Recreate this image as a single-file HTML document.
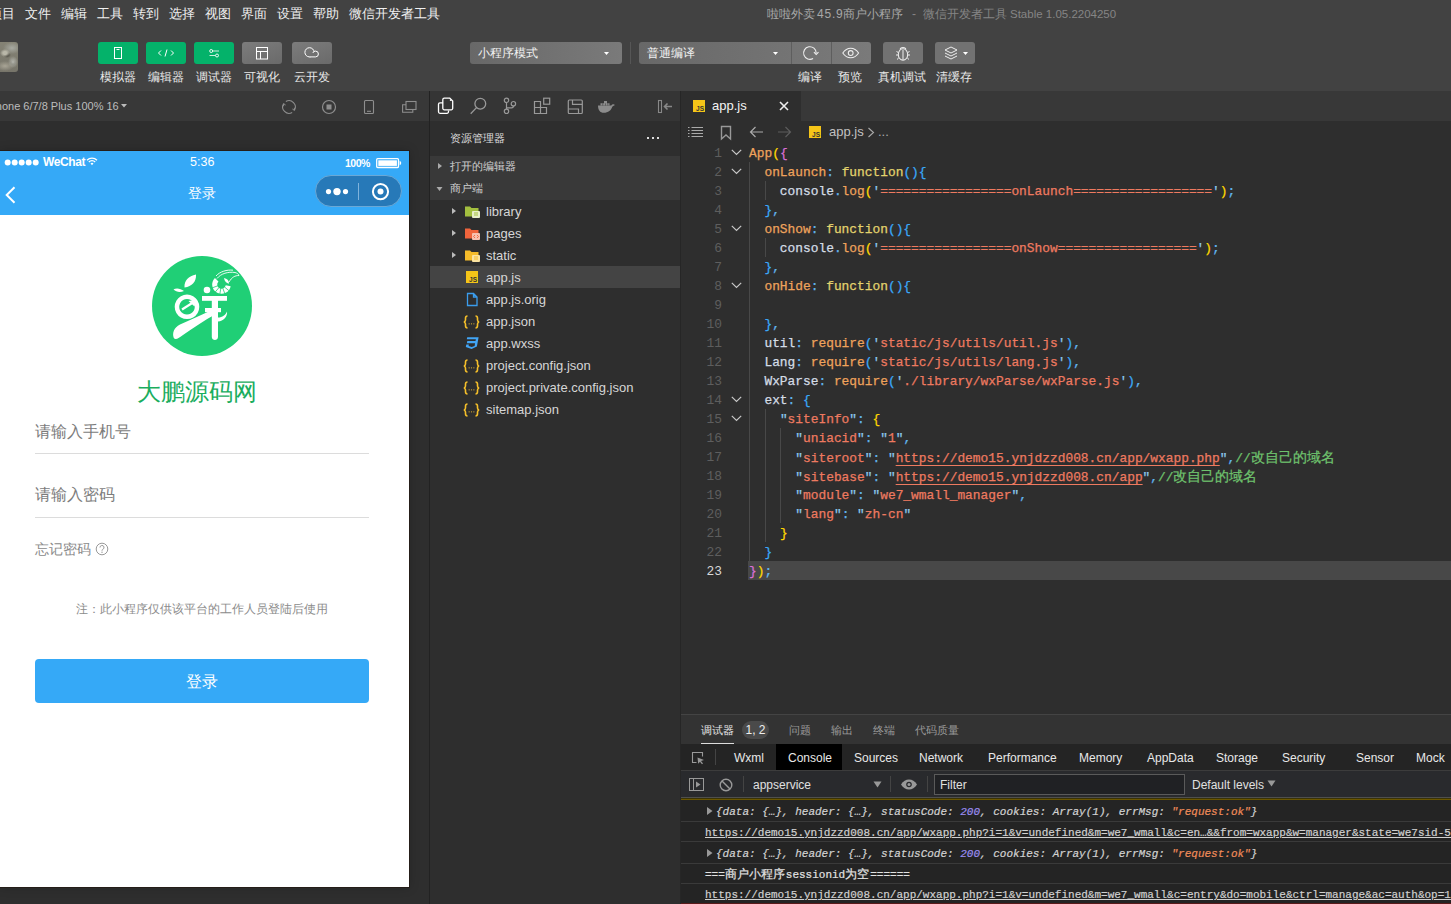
<!DOCTYPE html>
<html><head><meta charset="utf-8">
<style>
*{margin:0;padding:0;box-sizing:border-box}
html,body{width:1451px;height:904px;overflow:hidden;background:#424242;font-family:"Liberation Sans",sans-serif;color:#ddd}
.a{position:absolute}
.ttl span{position:absolute;top:6px;font-size:12px;line-height:16px;white-space:nowrap;color:#858585}
.menu span{position:absolute;top:5px;font-size:13px;line-height:18px;color:#f0f0f0;white-space:nowrap}
.tb{position:absolute;top:42px;width:40px;height:22px;border-radius:3px;background:#04b26a}
.tb.g{background:linear-gradient(160deg,#7c7c7c,#6a6a6a)}
.lbl{position:absolute;top:69px;font-size:12px;line-height:16px;color:#e8e8e8;white-space:nowrap}
.dd{position:absolute;top:42px;height:22px;border-radius:3px;background:linear-gradient(to right,#686868,#7a7a7a)}
svg{position:absolute;overflow:visible}
.cl{position:absolute;left:749px;margin-top:1px;height:19px;font-family:"Liberation Mono",monospace;font-size:12.87px;line-height:19px;white-space:pre;color:#d4dde6;-webkit-text-stroke:0.25px currentColor}
.ln{position:absolute;left:690px;margin-top:1px;width:32px;text-align:right;font-family:"Liberation Mono",monospace;font-size:12.87px;line-height:19px;color:#5e5e5e}
.ln.cur{color:#d8d8d8}
.ig{position:absolute;width:1px;background:#484848}
.o{color:#efa35c}.y{color:#e3d36d}.b{color:#62b6ee}.t{color:#d4dde6}.s{color:#ee7a60}.q{color:#8cc8ec}.c{color:#6ec26d}
.by{color:#ffd700}.bm{color:#da70d6}.bb{color:#3aa8f8}
.u{color:#ee7a60;text-decoration:underline;text-underline-offset:3px}

.dbt{top:722px;font-size:11px;line-height:16px;color:#9a9a9a;white-space:nowrap}
.dvt span{position:absolute;top:750px;font-size:12px;line-height:16px;color:#e8e8e8;white-space:nowrap}
.cm{position:absolute;font-family:"Liberation Mono",monospace;font-size:11px;line-height:14px;white-space:pre;color:#e2e2e2;-webkit-text-stroke:0.2px currentColor}
.it{font-style:italic;color:#d2d2d2}
.num{color:#9a8cf0}.str{color:#f08c5a}
.lk{text-decoration:underline;color:#d0d0d0}
.cjc{font-family:"Liberation Sans",sans-serif;font-size:12px;display:inline-block;width:61px}
.cjc2{font-family:"Liberation Sans",sans-serif;font-size:12px;display:inline-block;width:25px}
.cj{color:#6ec26d;font-family:"Liberation Sans",sans-serif;font-size:14px;display:inline-block;width:84px}

</style></head><body>

<!-- ===== menu bar ===== -->
<div class="menu">
<span style="left:-11px">项目</span><span style="left:25px">文件</span><span style="left:61px">编辑</span><span style="left:97px">工具</span><span style="left:133px">转到</span><span style="left:169px">选择</span><span style="left:205px">视图</span><span style="left:241px">界面</span><span style="left:277px">设置</span><span style="left:313px">帮助</span><span style="left:349px">微信开发者工具</span>
</div>
<div class="ttl"><span style="left:767px;color:#a8a8a8">啦啦外卖</span><span style="left:817px;color:#a8a8a8;letter-spacing:0.8px">45.9</span><span style="left:843px;color:#a8a8a8">商户小程序</span><span style="left:912px">-</span><span style="left:923px">微信开发者工具</span><span style="left:1010px;font-size:11.5px">Stable 1.05.2204250</span></div>

<!-- ===== toolbar ===== -->
<div class="a" style="left:0;top:42px;width:18px;height:30px;border-radius:0 3px 3px 0;background:radial-gradient(ellipse 5px 4px at 5px 11px,#b9b7a8 0,#b9b7a8 40%,transparent 100%),radial-gradient(ellipse 4px 3px at 7px 13px,#3e3d35 0,transparent 100%),radial-gradient(ellipse 5px 6px at 13px 20px,#b7b8b0 0,transparent 100%),radial-gradient(ellipse 3px 3px at 13px 21px,#4a4940 0,transparent 100%),radial-gradient(ellipse 9px 5px at 5px 24px,#a9a596 0,transparent 100%),radial-gradient(ellipse 9px 6px at 12px 6px,#a8aaa2 0,transparent 100%),linear-gradient(#858375,#77756a)"></div>
<div class="tb" style="left:98px"><svg style="left:0;top:0" width="40" height="22"><rect x="16.5" y="5.5" width="7" height="11" fill="none" stroke="#fff" stroke-width="1"/><line x1="18.5" y1="7.5" x2="21.5" y2="7.5" stroke="#fff"/></svg></div>
<div class="tb" style="left:146px"><svg style="left:0;top:0" width="40" height="22"><path d="M15 8.5l-2.5 2.5 2.5 2.5M25 8.5l2.5 2.5-2.5 2.5M21 7.5l-2 7" fill="none" stroke="#fff" stroke-width="1"/></svg></div>
<div class="tb" style="left:194px"><svg style="left:0;top:0" width="40" height="22"><path d="M18.5 9h6.5M15.5 13.5h6" stroke="#cdeedd" stroke-width="1"/><circle cx="17.2" cy="9" r="1.5" fill="#04b26a" stroke="#fff" stroke-width="0.9"/><circle cx="23" cy="13.5" r="1.5" fill="#04b26a" stroke="#fff" stroke-width="0.9"/></svg></div>
<div class="tb g" style="left:242px"><svg style="left:0;top:0" width="40" height="22"><rect x="14.5" y="5.5" width="11" height="11.5" fill="none" stroke="#fff"/><path d="M14.5 9.5h11M18.5 9.5v7.5" stroke="#fff"/></svg></div>
<div class="tb g" style="left:292px"><svg style="left:0;top:0" width="40" height="22"><circle cx="17.5" cy="10.3" r="4.6" fill="none" stroke="#fff" stroke-width="1"/><path d="M17.5 14.9H23.5A2.9 2.9 0 0 0 23.5 9.1A2.9 2.9 0 0 0 20.8 11" fill="#717171" stroke="#fff" stroke-width="1"/></svg></div>
<span class="lbl" style="left:100px">模拟器</span><span class="lbl" style="left:148px">编辑器</span><span class="lbl" style="left:196px">调试器</span><span class="lbl" style="left:244px">可视化</span><span class="lbl" style="left:294px">云开发</span>

<div class="dd" style="left:470px;width:152px"><span class="a" style="left:8px;top:3px;font-size:12px;line-height:16px;color:#f2f2f2">小程序模式</span><svg style="left:134px;top:10px" width="6" height="4"><path d="M0 0h5l-2.5 3z" fill="#fff"/></svg></div>
<div class="a" style="left:630px;top:42px;width:1px;height:22px;background:#565656"></div>
<div class="dd" style="left:639px;width:232px"><span class="a" style="left:8px;top:3px;font-size:12px;line-height:16px;color:#f2f2f2">普通编译</span><svg style="left:134px;top:10px" width="6" height="4"><path d="M0 0h5l-2.5 3z" fill="#fff"/></svg>
<div class="a" style="left:152px;top:0;width:1px;height:22px;background:#5e5e5e"></div><div class="a" style="left:192px;top:0;width:1px;height:22px;background:#5e5e5e"></div>
<svg style="left:163px;top:1px" width="18" height="18"><path d="M11.05 15.46A6.3 6.3 0 1 1 14.2 10" fill="none" stroke="#eee" stroke-width="1.1"/><path d="M11.9 9.2L14.2 11.5L16.5 9.2" fill="none" stroke="#eee" stroke-width="1.1"/></svg>
<svg style="left:203px;top:3px" width="18" height="16"><path d="M0.8 8c2.2-3.3 4.7-4.8 7.9-4.8s5.7 1.5 7.9 4.8c-2.2 3.3-4.7 4.8-7.9 4.8s-5.7-1.5-7.9-4.8z" fill="none" stroke="#eee" stroke-width="1.05"/><circle cx="8.7" cy="8" r="2.4" fill="none" stroke="#eee" stroke-width="1.05"/></svg>
</div>
<div class="dd" style="left:883px;width:40px;background:#727272"><svg style="left:12px;top:3px" width="16" height="16"><path d="M3.3 9.5A4.7 5.7 0 0 0 12.7 9.5A4.7 5.7 0 0 0 3.3 9.5Z" fill="none" stroke="#eee" stroke-width="1.05"/><path d="M5.2 4.6A2.8 2.2 0 0 1 10.8 4.6" fill="none" stroke="#eee" stroke-width="1.05"/><path d="M8 5v10M3.3 7.5L1.5 6.5M12.7 7.5L14.5 6.5M3.3 10H1M12.7 10H15M3.8 12.8L2 14.5M12.2 12.8L14 14.5" stroke="#eee" stroke-width="1" fill="none"/></svg></div>
<div class="dd" style="left:935px;width:40px;background:#727272"><svg style="left:8px;top:3px" width="16" height="16"><path d="M8 2l6 3-6 3-6-3z M2 8l6 3 6-3 M2 11l6 3 6-3" fill="none" stroke="#eee"/></svg><svg style="left:28px;top:10px" width="6" height="4"><path d="M0 0h5l-2.5 3z" fill="#fff"/></svg></div>
<span class="lbl" style="left:798px">编译</span><span class="lbl" style="left:838px">预览</span><span class="lbl" style="left:878px">真机调试</span><span class="lbl" style="left:936px">清缓存</span>

<!-- ===== simulator ===== -->
<div class="a" style="left:0;top:91px;width:429px;height:813px;background:#2e2e2e"></div>
<div class="a" style="left:0;top:91px;width:429px;height:30px;background:#383838"></div>
<span class="a" style="left:-14px;top:99px;font-size:11px;line-height:14px;color:#bdbdbd;white-space:nowrap">iPhone 6/7/8 Plus 100% 16</span>
<svg style="left:121px;top:104px" width="6" height="4"><path d="M0 0h6l-3 3.5z" fill="#bbb"/></svg>
<svg style="left:281px;top:99px" width="16" height="16"><path d="M4.85 2.54A6.3 6.3 0 0 1 13.46 11.15M11.15 13.46A6.3 6.3 0 0 1 2.54 4.85" fill="none" stroke="#8e8e8e" stroke-width="1.1"/><path d="M2.6 7.2L2.6 4.6L4.6 6M13.4 8.8L13.4 11.4L11.4 10" fill="none" stroke="#8e8e8e" stroke-width="1"/></svg>
<svg style="left:321px;top:99px" width="16" height="16"><circle cx="8" cy="8" r="6.5" fill="none" stroke="#8e8e8e" stroke-width="1.2"/><rect x="5.5" y="5.5" width="5" height="5" fill="#8e8e8e"/></svg>
<svg style="left:361px;top:99px" width="16" height="16"><rect x="3.5" y="1.5" width="9" height="13" rx="1" fill="none" stroke="#8e8e8e" stroke-width="1.1"/><line x1="6" y1="12.3" x2="10" y2="12.3" stroke="#8e8e8e" stroke-width="1.1"/></svg>
<svg style="left:401px;top:99px" width="16" height="16"><rect x="5" y="2.5" width="10" height="8" fill="none" stroke="#8e8e8e" stroke-width="1.1"/><path d="M5 5.8H1.6V13.3H11.8V10.5" fill="none" stroke="#8e8e8e" stroke-width="1.1"/></svg>

<!-- ===== phone ===== -->
<div class="a" style="left:0;top:151px;width:409px;height:736px;background:#fff;box-shadow:0 0 0 1px rgba(35,25,18,0.7),0 0 10px rgba(0,0,0,0.22)"></div>
<div class="a" style="left:0;top:151px;width:409px;height:64px;background:#35a9f7"></div>
<svg style="left:4px;top:158px" width="40" height="8"><circle cx="3.7" cy="4.5" r="3" fill="#fff"/><circle cx="10.7" cy="4.5" r="3" fill="#fff"/><circle cx="17.7" cy="4.5" r="3" fill="#fff"/><circle cx="24.7" cy="4.5" r="3" fill="#fff"/><circle cx="31.7" cy="4.5" r="3" fill="#fff"/></svg>
<span class="a" style="left:43px;top:155px;font-size:12px;line-height:14px;color:#fff;font-weight:bold;letter-spacing:-0.4px">WeChat</span>
<svg style="left:86px;top:157px" width="12" height="9"><path d="M1 3.2a7 7 0 0 1 10 0M2.8 5a4.5 4.5 0 0 1 6.4 0" fill="none" stroke="#fff" stroke-width="1.3"/><path d="M4.5 6.6a2 2 0 0 1 3 0L6 8.3z" fill="#fff"/></svg>
<span class="a" style="left:190px;top:155px;font-size:12.5px;line-height:14px;color:#fff">5:36</span>
<span class="a" style="left:345px;top:157px;font-size:10.5px;line-height:12px;color:#fff;font-weight:bold;letter-spacing:-0.5px">100%</span>
<svg style="left:376px;top:158px" width="28" height="11"><rect x="0.7" y="0.7" width="21.8" height="8.8" rx="1" fill="none" stroke="#fff" stroke-width="1.3"/><rect x="2.3" y="2.3" width="18.6" height="5.6" fill="#fff"/><path d="M23.6 3c1.1 0.2 1.6 1 1.6 2.1s-0.5 1.9-1.6 2.1z" fill="#fff"/></svg>
<svg style="left:4px;top:186px" width="12" height="18"><path d="M10.5 1.2l-7.8 7.8 7.8 7.8" fill="none" stroke="#fff" stroke-width="2"/></svg>
<span class="a" style="left:186px;top:185px;font-size:14px;line-height:17px;color:#fff;width:32px;text-align:center">登录</span>
<div class="a" style="left:315px;top:175px;width:87px;height:32px;border-radius:16px;background:#2779b8;border:1px solid #6aa8d6"></div>
<svg style="left:326px;top:186px" width="22" height="11"><circle cx="2.5" cy="5.6" r="2.6" fill="#fff"/><circle cx="11" cy="5.6" r="3.7" fill="#fff"/><circle cx="19.5" cy="5.6" r="2.6" fill="#fff"/></svg>
<div class="a" style="left:358px;top:183px;width:1px;height:17px;background:#7fb3dc"></div>
<svg style="left:370px;top:181px" width="20" height="20"><circle cx="10.5" cy="10.6" r="7.6" fill="none" stroke="#fff" stroke-width="2"/><circle cx="10.5" cy="10.6" r="3" fill="#fff"/></svg>

<svg style="left:152px;top:256px" width="100" height="100" viewBox="0 0 100 100">
<circle cx="50" cy="50" r="50" fill="#20cf76"/>
<g fill="#fff">
<path d="M32.5 31.5C32 24.5 36.5 20 44 18.5C44.5 25.5 40 30.5 32.5 31.5Z"/>
<path d="M32 35C28.5 32.3 24.5 31.8 21.5 33.3C24.2 36.3 28.2 36.8 32 35Z"/>
<circle cx="55" cy="34" r="3.3"/>
<path d="M35 38.5A12.3 12.3 0 1 0 35.01 38.5ZM35 43A7.8 7.8 0 1 1 34.99 43Z" fill-rule="evenodd"/>
<path d="M30 53.5L41 46.5" stroke="#fff" stroke-width="2.2"/>
<path d="M44.5 43.5L36.5 45L42.5 50.5Z"/>
<rect x="50" y="40" width="25" height="4.8"/>
<rect x="53" y="52" width="16" height="4.2"/>
<path d="M59.8 40H66V81C66 85 59.8 85 59.8 81Z"/>
<path d="M66 61.5C70.5 61.5 73.5 59 75 55.5C75.8 60.5 71.5 65 66 65.5Z"/>
<path d="M21.8 82C20 77 22 71.5 28 68.5C40 63 52 58 63 52.5L63 58.5C52 64.5 41 72 31 79C27 82 23.5 84.5 21.8 82Z"/>
</g>
<path d="M64.7 23.7A6.8 6.8 0 1 0 76.2 29.7" fill="none" stroke="#fff" stroke-width="5"/>
<path d="M66.1 29.7L60.1 31.9M67.2 31.3L63.1 36.2M68.9 32.0L67.8 38.3M70.7 31.9L72.9 37.9M72.3 30.8L77.2 34.9" stroke="#20cf76" stroke-width="0.8"/>
<path d="M65 22.5C69 17.5 76 15.5 83 16.5C85 17 86.5 18 87 19.5C83 19.5 80 21 77 26M64 20C68 15.5 75 13.5 81 14.2" fill="none" stroke="#fff" stroke-width="0.9"/><path d="M72 22C75 22.5 77 24.5 77 27.5C74.5 27.5 72.5 25 72 22Z" fill="#fff"/>
</svg>
<span class="a" style="left:137px;top:378px;font-size:24px;line-height:28px;color:#1aad5e;width:130px;white-space:nowrap">大鹏源码网</span>
<span class="a" style="left:35px;top:422px;font-size:16px;line-height:20px;color:#7c7c7c">请输入手机号</span>
<div class="a" style="left:35px;top:453px;width:334px;height:1px;background:#dcdcdc"></div>
<span class="a" style="left:35px;top:485px;font-size:16px;line-height:20px;color:#7c7c7c">请输入密码</span>
<div class="a" style="left:35px;top:517px;width:334px;height:1px;background:#dcdcdc"></div>
<span class="a" style="left:35px;top:541px;font-size:14px;line-height:16px;color:#8a8a8a">忘记密码</span>
<svg style="left:95px;top:542px" width="14" height="14"><circle cx="7" cy="7" r="5.8" fill="none" stroke="#999" stroke-width="1"/><path d="M5 5.5a2 2 0 1 1 2.8 1.8c-0.6 0.3-0.8 0.7-0.8 1.4" fill="none" stroke="#999" stroke-width="1"/><circle cx="7" cy="10.3" r="0.7" fill="#999"/></svg>
<span class="a" style="left:76px;top:602px;font-size:12px;line-height:15px;color:#8c8c8c;white-space:nowrap">注：此小程序仅供该平台的工作人员登陆后使用</span>
<div class="a" style="left:35px;top:659px;width:334px;height:44px;border-radius:4px;background:#35a9f7"></div>
<span class="a" style="left:186px;top:672px;font-size:16px;line-height:19px;color:#fff">登录</span>
<div class="a" style="left:429px;top:91px;width:1px;height:813px;background:#222"></div>

<!-- ===== explorer ===== -->
<div class="a" style="left:430px;top:91px;width:250px;height:813px;background:#2e2e2e"></div>
<div class="a" style="left:430px;top:91px;width:251px;height:30px;background:#353535"></div>
<svg style="left:436px;top:96px" width="20" height="20"><path d="M7 6.8H4A1.5 1.5 0 0 0 2.5 8.3V15.8A1.5 1.5 0 0 0 4 17.3H11A1.5 1.5 0 0 0 12.5 15.8V14.5" fill="none" stroke="#fff" stroke-width="1.3"/><path d="M8.3 2.2H13.8L16.7 5.1V12.3A1.5 1.5 0 0 1 15.2 13.8H8.3A1.5 1.5 0 0 1 6.8 12.3V3.7A1.5 1.5 0 0 1 8.3 2.2Z" fill="none" stroke="#fff" stroke-width="1.3"/><circle cx="14.6" cy="4.2" r="0.8" fill="#fff"/></svg>
<svg style="left:468px;top:96px" width="20" height="20"><circle cx="12.3" cy="7.7" r="5.4" fill="none" stroke="#999" stroke-width="1.3"/><path d="M8.5 11.6L2.7 17.8" stroke="#999" stroke-width="1.3"/></svg>
<svg style="left:500px;top:96px" width="20" height="20"><circle cx="6.5" cy="4.3" r="2.2" fill="none" stroke="#999" stroke-width="1.2"/><circle cx="6.5" cy="15.3" r="2.2" fill="none" stroke="#999" stroke-width="1.2"/><circle cx="13.4" cy="7.7" r="2.2" fill="none" stroke="#999" stroke-width="1.2"/><path d="M6.5 6.5V13.1M13.4 9.9V10.5C13.4 11.5 12.6 11.9 11.6 11.9H6.5" fill="none" stroke="#999" stroke-width="1.2"/></svg>
<svg style="left:532px;top:96px" width="20" height="20"><path d="M2.5 5.5H8.5V17.5H2.5ZM2.5 11.5H14.5V17.5H8.5" fill="none" stroke="#999" stroke-width="1.2"/><rect x="11.7" y="2.2" width="6" height="6" fill="none" stroke="#999" stroke-width="1.2"/></svg>
<svg style="left:566px;top:96px" width="20" height="20"><rect x="2.3" y="4" width="14" height="13.5" rx="1" fill="none" stroke="#999" stroke-width="1.2"/><path d="M6.5 4V8.3H16.3M2.3 13H12.5V17.5" fill="none" stroke="#999" stroke-width="1.2"/></svg>
<svg style="left:597px;top:98px" width="19" height="16"><path d="M1 7.5H14.3C14.8 6.5 15.6 6 16.6 6.3L18 6.9L16.6 7.8C16.1 8.2 15.8 8.4 15.4 8.5C14.3 12.3 11.2 14.8 6.8 14.8C3 14.8 1 12 1 7.5Z" fill="#8c8c8c"/><path d="M3.5 5.3H12.5V7.5H3.5ZM7 3H10V5.3H7Z" fill="#8c8c8c"/><path d="M5.7 5.3V7.5M8.5 5.3V7.5M10.8 5.3V7.5" stroke="#353535" stroke-width="0.5"/></svg>
<svg style="left:657px;top:99px" width="16" height="16"><rect x="1.5" y="1.5" width="3" height="12" fill="none" stroke="#888" stroke-width="1.1"/><path d="M15 7.5h-7.5M10.5 4.5l-3 3 3 3" fill="none" stroke="#888" stroke-width="1.6"/></svg>
<span class="a" style="left:450px;top:131px;font-size:11px;line-height:14px;color:#dcdcdc">资源管理器</span>
<svg style="left:647px;top:137px" width="14" height="3"><rect x="0" y="0" width="2" height="2" fill="#ddd"/><rect x="5" y="0" width="2" height="2" fill="#ddd"/><rect x="10" y="0" width="2" height="2" fill="#ddd"/></svg>
<div class="a" style="left:430px;top:156px;width:250px;height:44px;background:#393939"></div>
<svg style="left:437px;top:162px" width="6" height="8"><path d="M1 1l4 3-4 3z" fill="#aaa"/></svg>
<span class="a" style="left:450px;top:159px;font-size:11px;line-height:14px;color:#d0d0d0">打开的编辑器</span>
<svg style="left:436px;top:186px" width="8" height="6"><path d="M0.5 1h6l-3 4z" fill="#aaa"/></svg>
<span class="a" style="left:450px;top:181px;font-size:11px;line-height:14px;color:#d0d0d0">商户端</span>
<div class="a" style="left:430px;top:266px;width:250px;height:22px;background:#444"></div>
<div id="files" style="font-size:13px;color:#d6d6d6">
<svg style="left:451px;top:207px" width="6" height="8"><path d="M1 1l4 3-4 3z" fill="#bbb"/></svg>
<svg style="left:451px;top:229px" width="6" height="8"><path d="M1 1l4 3-4 3z" fill="#bbb"/></svg>
<svg style="left:451px;top:251px" width="6" height="8"><path d="M1 1l4 3-4 3z" fill="#bbb"/></svg>
<svg style="left:464px;top:204px" width="17" height="15"><path d="M1 2.5h5l1.5 1.5h7v8.5h-13.5z" fill="#a3bf3f"/><rect x="8" y="7" width="8" height="7" rx="1" fill="#e8eec8"/><path d="M10 9h4M10 11h4" stroke="#a3bf3f"/></svg>
<svg style="left:464px;top:226px" width="17" height="15"><path d="M1 2.5h5l1.5 1.5h7v8.5h-13.5z" fill="#f0643c"/><rect x="8" y="7" width="8" height="7" rx="1" fill="#f7c0b0"/><path d="M11 9l-1.5 1.5 1.5 1.5M13 9l1.5 1.5-1.5 1.5" fill="none" stroke="#f0643c" stroke-width="0.9"/></svg>
<svg style="left:464px;top:248px" width="17" height="15"><path d="M1 2.5h5l1.5 1.5h7v8.5h-13.5z" fill="#f5bb2a"/><rect x="8" y="7" width="8" height="7" rx="1" fill="#fbe3a0"/><path d="M10 9h4M10 11h4" stroke="#f5bb2a"/></svg>
<svg style="left:466px;top:271px" width="12" height="12"><rect width="12" height="12" fill="#f5c518"/><text x="11" y="11" font-size="6.5" font-family="Liberation Sans" font-weight="bold" fill="#333" text-anchor="end">JS</text></svg>
<svg style="left:466px;top:292px" width="12" height="15"><path d="M1.5 1.5h6l3.5 3.5v8.5h-9.5z M7.5 1.5v3.5h3.5" fill="none" stroke="#3b9ded" stroke-width="1.3"/></svg>
<svg style="left:463px;top:315px" width="18" height="14"><path d="M4.5 1c-1.6 0-2 0.8-2 2.2v1.8c0 1-0.6 1.8-1.6 2 1 0.2 1.6 1 1.6 2v1.8c0 1.4 0.4 2.2 2 2.2M12.5 1c1.6 0 2 0.8 2 2.2v1.8c0 1 0.6 1.8 1.6 2-1 0.2-1.6 1-1.6 2v1.8c0 1.4-0.4 2.2-2 2.2" fill="none" stroke="#f5bf2a" stroke-width="1.6"/><rect x="5.6" y="8.3" width="1.1" height="1.1" fill="#c9a030"/><rect x="7.95" y="8.3" width="1.1" height="1.1" fill="#c9a030"/><rect x="10.3" y="8.3" width="1.1" height="1.1" fill="#c9a030"/></svg>
<svg style="left:465px;top:337px" width="14" height="13"><path d="M2.2 0.2H13.6L11.9 9.6 6.6 12 0.8 10.1 1.3 7.6H3.9L3.6 9 6.7 10 9.6 9 10.1 6.2H1.9L2.3 4.1H10.5L10.9 2.3H1.8Z" fill="#42a5f5"/></svg>
<svg style="left:463px;top:359px" width="18" height="14"><path d="M4.5 1c-1.6 0-2 0.8-2 2.2v1.8c0 1-0.6 1.8-1.6 2 1 0.2 1.6 1 1.6 2v1.8c0 1.4 0.4 2.2 2 2.2M12.5 1c1.6 0 2 0.8 2 2.2v1.8c0 1 0.6 1.8 1.6 2-1 0.2-1.6 1-1.6 2v1.8c0 1.4-0.4 2.2-2 2.2" fill="none" stroke="#f5bf2a" stroke-width="1.6"/><rect x="5.6" y="8.3" width="1.1" height="1.1" fill="#c9a030"/><rect x="7.95" y="8.3" width="1.1" height="1.1" fill="#c9a030"/><rect x="10.3" y="8.3" width="1.1" height="1.1" fill="#c9a030"/></svg>
<svg style="left:463px;top:381px" width="18" height="14"><path d="M4.5 1c-1.6 0-2 0.8-2 2.2v1.8c0 1-0.6 1.8-1.6 2 1 0.2 1.6 1 1.6 2v1.8c0 1.4 0.4 2.2 2 2.2M12.5 1c1.6 0 2 0.8 2 2.2v1.8c0 1 0.6 1.8 1.6 2-1 0.2-1.6 1-1.6 2v1.8c0 1.4-0.4 2.2-2 2.2" fill="none" stroke="#f5bf2a" stroke-width="1.6"/><rect x="5.6" y="8.3" width="1.1" height="1.1" fill="#c9a030"/><rect x="7.95" y="8.3" width="1.1" height="1.1" fill="#c9a030"/><rect x="10.3" y="8.3" width="1.1" height="1.1" fill="#c9a030"/></svg>
<svg style="left:463px;top:403px" width="18" height="14"><path d="M4.5 1c-1.6 0-2 0.8-2 2.2v1.8c0 1-0.6 1.8-1.6 2 1 0.2 1.6 1 1.6 2v1.8c0 1.4 0.4 2.2 2 2.2M12.5 1c1.6 0 2 0.8 2 2.2v1.8c0 1 0.6 1.8 1.6 2-1 0.2-1.6 1-1.6 2v1.8c0 1.4-0.4 2.2-2 2.2" fill="none" stroke="#f5bf2a" stroke-width="1.6"/><rect x="5.6" y="8.3" width="1.1" height="1.1" fill="#c9a030"/><rect x="7.95" y="8.3" width="1.1" height="1.1" fill="#c9a030"/><rect x="10.3" y="8.3" width="1.1" height="1.1" fill="#c9a030"/></svg>
<span class="a" style="left:486px;top:204px">library</span>
<span class="a" style="left:486px;top:226px">pages</span>
<span class="a" style="left:486px;top:248px">static</span>
<span class="a" style="left:486px;top:270px">app.js</span>
<span class="a" style="left:486px;top:292px">app.js.orig</span>
<span class="a" style="left:486px;top:314px">app.json</span>
<span class="a" style="left:486px;top:336px">app.wxss</span>
<span class="a" style="left:486px;top:358px">project.config.json</span>
<span class="a" style="left:486px;top:380px">project.private.config.json</span>
<span class="a" style="left:486px;top:402px">sitemap.json</span>
</div>
<div class="a" style="left:680px;top:91px;width:1px;height:813px;background:#262626"></div>

<!-- ===== editor ===== -->
<div class="a" style="left:681px;top:91px;width:770px;height:30px;background:#383838"></div>
<div class="a" style="left:681px;top:91px;width:120px;height:30px;background:#2e2e2e"></div>
<svg style="left:693px;top:100px" width="12" height="12"><rect width="12" height="12" fill="#f5c518"/><text x="11" y="11" font-size="6.5" font-family="Liberation Sans" font-weight="bold" fill="#333" text-anchor="end">JS</text></svg>
<span class="a" style="left:712px;top:98px;font-size:13px;line-height:16px;color:#f4f4f4">app.js</span>
<svg style="left:779px;top:101px" width="10" height="10"><path d="M1 1l8 8M9 1l-8 8" stroke="#eee" stroke-width="1.6"/></svg>
<div class="a" style="left:681px;top:121px;width:770px;height:593px;background:#2e2e2e"></div>
<svg style="left:688px;top:126px" width="16" height="12"><path d="M0 1.5h1.5M0 4.5h1.5M0 7.5h1.5M0 10.5h1.5M3.5 1.5h11.5M3.5 4.5h11.5M3.5 7.5h11.5M3.5 10.5h11.5" stroke="#aaa" stroke-width="1"/></svg>
<svg style="left:720px;top:125px" width="12" height="15"><path d="M1.5 1.5h9v12.5l-4.5-4-4.5 4z" fill="none" stroke="#999" stroke-width="1.4"/></svg>
<svg style="left:749px;top:126px" width="15" height="12"><path d="M14 6h-12.5M6.5 1l-5 5 5 5" fill="none" stroke="#aaa" stroke-width="1.2"/></svg>
<svg style="left:777px;top:126px" width="15" height="12"><path d="M1 6h12.5M8.5 1l5 5-5 5" fill="none" stroke="#5c5c5c" stroke-width="1.2"/></svg>
<svg style="left:809px;top:126px" width="12" height="12"><rect width="12" height="12" fill="#f5c518"/><text x="11" y="11" font-size="6.5" font-family="Liberation Sans" font-weight="bold" fill="#333" text-anchor="end">JS</text></svg>
<span class="a" style="left:829px;top:124px;font-size:13px;line-height:16px;color:#c2c2c2">app.js</span>
<svg style="left:867px;top:127px" width="8" height="11"><path d="M1.5 1l5 4.5-5 4.5" fill="none" stroke="#aaa" stroke-width="1.1"/></svg>
<span class="a" style="left:878px;top:124px;font-size:13px;line-height:16px;color:#aaa">...</span>
<div class="a" style="left:748px;top:561px;width:703px;height:19px;background:#484848"></div>
<!-- indent guides -->
<div class="ig" style="left:749px;top:162px;height:399px"></div>
<div class="ig" style="left:765px;top:181px;height:19px"></div>
<div class="ig" style="left:765px;top:238px;height:19px"></div>
<div class="ig" style="left:765px;top:409px;height:133px"></div>
<div class="ig" style="left:780px;top:428px;height:95px"></div>
<!-- fold chevrons -->
<svg style="left:731px;top:149px" width="11" height="7"><path d="M0.8 0.8l4.7 4.7 4.7-4.7" fill="none" stroke="#c8c8c8" stroke-width="1.2"/></svg>
<svg style="left:731px;top:168px" width="11" height="7"><path d="M0.8 0.8l4.7 4.7 4.7-4.7" fill="none" stroke="#c8c8c8" stroke-width="1.2"/></svg>
<svg style="left:731px;top:225px" width="11" height="7"><path d="M0.8 0.8l4.7 4.7 4.7-4.7" fill="none" stroke="#c8c8c8" stroke-width="1.2"/></svg>
<svg style="left:731px;top:282px" width="11" height="7"><path d="M0.8 0.8l4.7 4.7 4.7-4.7" fill="none" stroke="#c8c8c8" stroke-width="1.2"/></svg>
<svg style="left:731px;top:396px" width="11" height="7"><path d="M0.8 0.8l4.7 4.7 4.7-4.7" fill="none" stroke="#c8c8c8" stroke-width="1.2"/></svg>
<svg style="left:731px;top:415px" width="11" height="7"><path d="M0.8 0.8l4.7 4.7 4.7-4.7" fill="none" stroke="#c8c8c8" stroke-width="1.2"/></svg>
<div id="code">
<div class="cl" style="top:143px"><span class="o">App</span><span class="by">(</span><span class="bm">{</span></div>
<div class="ln" style="top:143px">1</div>
<div class="cl" style="top:162px"><span class="t">  </span><span class="o">onLaunch</span><span class="b">: </span><span class="y">function</span><span class="bb">(){</span></div>
<div class="ln" style="top:162px">2</div>
<div class="cl" style="top:181px"><span class="t">    console</span><span class="b">.</span><span class="o">log</span><span class="by">(</span><span class="q">&#x27;</span><span class="s">=================onLaunch==================</span><span class="q">&#x27;</span><span class="by">)</span><span class="b">;</span></div>
<div class="ln" style="top:181px">3</div>
<div class="cl" style="top:200px"><span class="t">  </span><span class="bb">}</span><span class="b">,</span></div>
<div class="ln" style="top:200px">4</div>
<div class="cl" style="top:219px"><span class="t">  </span><span class="o">onShow</span><span class="b">: </span><span class="y">function</span><span class="bb">(){</span></div>
<div class="ln" style="top:219px">5</div>
<div class="cl" style="top:238px"><span class="t">    console</span><span class="b">.</span><span class="o">log</span><span class="by">(</span><span class="q">&#x27;</span><span class="s">=================onShow==================</span><span class="q">&#x27;</span><span class="by">)</span><span class="b">;</span></div>
<div class="ln" style="top:238px">6</div>
<div class="cl" style="top:257px"><span class="t">  </span><span class="bb">}</span><span class="b">,</span></div>
<div class="ln" style="top:257px">7</div>
<div class="cl" style="top:276px"><span class="t">  </span><span class="o">onHide</span><span class="b">: </span><span class="y">function</span><span class="bb">(){</span></div>
<div class="ln" style="top:276px">8</div>
<div class="cl" style="top:295px"></div>
<div class="ln" style="top:295px">9</div>
<div class="cl" style="top:314px"><span class="t">  </span><span class="bb">}</span><span class="b">,</span></div>
<div class="ln" style="top:314px">10</div>
<div class="cl" style="top:333px"><span class="t">  util</span><span class="b">: </span><span class="o">require</span><span class="bb">(</span><span class="q">&#x27;</span><span class="s">static/js/utils/util.js</span><span class="q">&#x27;</span><span class="bb">)</span><span class="b">,</span></div>
<div class="ln" style="top:333px">11</div>
<div class="cl" style="top:352px"><span class="t">  Lang</span><span class="b">: </span><span class="o">require</span><span class="bb">(</span><span class="q">&#x27;</span><span class="s">static/js/utils/lang.js</span><span class="q">&#x27;</span><span class="bb">)</span><span class="b">,</span></div>
<div class="ln" style="top:352px">12</div>
<div class="cl" style="top:371px"><span class="t">  WxParse</span><span class="b">: </span><span class="o">require</span><span class="bb">(</span><span class="q">&#x27;</span><span class="s">./library/wxParse/wxParse.js</span><span class="q">&#x27;</span><span class="bb">)</span><span class="b">,</span></div>
<div class="ln" style="top:371px">13</div>
<div class="cl" style="top:390px"><span class="t">  ext</span><span class="b">: </span><span class="bb">{</span></div>
<div class="ln" style="top:390px">14</div>
<div class="cl" style="top:409px"><span class="t">    </span><span class="q">&quot;</span><span class="s">siteInfo</span><span class="q">&quot;</span><span class="b">: </span><span class="by">{</span></div>
<div class="ln" style="top:409px">15</div>
<div class="cl" style="top:428px"><span class="t">      </span><span class="q">&quot;</span><span class="s">uniacid</span><span class="q">&quot;</span><span class="b">: </span><span class="q">&quot;</span><span class="s">1</span><span class="q">&quot;</span><span class="b">,</span></div>
<div class="ln" style="top:428px">16</div>
<div class="cl" style="top:447px"><span class="t">      </span><span class="q">&quot;</span><span class="s">siteroot</span><span class="q">&quot;</span><span class="b">: </span><span class="q">&quot;</span><span class="u">https://demo15.ynjdzzd008.cn/app/wxapp.php</span><span class="q">&quot;</span><span class="b">,</span><span class="c">//</span><span class="cj">改自己的域名</span></div>
<div class="ln" style="top:447px">17</div>
<div class="cl" style="top:466px"><span class="t">      </span><span class="q">&quot;</span><span class="s">sitebase</span><span class="q">&quot;</span><span class="b">: </span><span class="q">&quot;</span><span class="u">https://demo15.ynjdzzd008.cn/app</span><span class="q">&quot;</span><span class="b">,</span><span class="c">//</span><span class="cj">改自己的域名</span></div>
<div class="ln" style="top:466px">18</div>
<div class="cl" style="top:485px"><span class="t">      </span><span class="q">&quot;</span><span class="s">module</span><span class="q">&quot;</span><span class="b">: </span><span class="q">&quot;</span><span class="s">we7_wmall_manager</span><span class="q">&quot;</span><span class="b">,</span></div>
<div class="ln" style="top:485px">19</div>
<div class="cl" style="top:504px"><span class="t">      </span><span class="q">&quot;</span><span class="s">lang</span><span class="q">&quot;</span><span class="b">: </span><span class="q">&quot;</span><span class="s">zh-cn</span><span class="q">&quot;</span></div>
<div class="ln" style="top:504px">20</div>
<div class="cl" style="top:523px"><span class="t">    </span><span class="by">}</span></div>
<div class="ln" style="top:523px">21</div>
<div class="cl" style="top:542px"><span class="t">  </span><span class="bb">}</span></div>
<div class="ln" style="top:542px">22</div>
<div class="cl" style="top:561px"><span class="bm">}</span><span class="by">)</span><span class="b">;</span></div>
<div class="ln cur" style="top:561px">23</div>

</div>

<!-- ===== debugger panel ===== -->
<div class="a" style="left:681px;top:714px;width:770px;height:190px;background:#333"></div>
<div class="a" style="left:681px;top:714px;width:770px;height:1px;background:#444"></div>
<span class="a dbt" style="left:701px;color:#e6e6e6">调试器</span>
<div class="a" style="left:742px;top:721px;width:27px;height:18px;border-radius:9px;background:#4a4a4a"></div>
<span class="a" style="left:745px;top:722px;width:21px;text-align:center;font-size:12px;line-height:16px;color:#eee">1, 2</span>
<div class="a" style="left:701px;top:743px;width:33px;height:1px;background:#ddd"></div>
<span class="a dbt" style="left:789px">问题</span>
<span class="a dbt" style="left:831px">输出</span>
<span class="a dbt" style="left:873px">终端</span>
<span class="a dbt" style="left:915px">代码质量</span>
<div class="a" style="left:681px;top:744px;width:770px;height:26px;background:#242424"></div>
<div class="a" style="left:776px;top:744px;width:66px;height:26px;background:#000"></div>
<svg style="left:691px;top:751px" width="14" height="13"><path d="M5.5 11.5h-4v-10h10v4" fill="none" stroke="#999" stroke-width="1.1"/><path d="M6.5 6.5l6.5 2.5-3 1 2 2.5-1 0.8-2-2.5-1.8 2z" fill="#999"/></svg>
<div class="a" style="left:715px;top:749px;width:1px;height:16px;background:#444"></div>
<div class="dvt">
<span style="left:734px">Wxml</span><span style="left:788px">Console</span><span style="left:854px">Sources</span><span style="left:919px">Network</span><span style="left:988px">Performance</span><span style="left:1079px">Memory</span><span style="left:1147px">AppData</span><span style="left:1216px">Storage</span><span style="left:1282px">Security</span><span style="left:1356px">Sensor</span><span style="left:1416px">Mock</span>
</div>
<div class="a" style="left:681px;top:770px;width:770px;height:1px;background:#3c3c3c"></div>
<div class="a" style="left:681px;top:771px;width:770px;height:26px;background:#292a2d"></div>
<svg style="left:689px;top:778px" width="16" height="14"><rect x="0.5" y="0.5" width="14" height="12" fill="none" stroke="#999"/><path d="M4.5 0.5v12" stroke="#999"/><path d="M7 3.5l4.5 3-4.5 3z" fill="#999"/></svg>
<svg style="left:719px;top:778px" width="14" height="14"><circle cx="7" cy="7" r="5.8" fill="none" stroke="#999" stroke-width="1.4"/><path d="M3 3l8 8" stroke="#999" stroke-width="1.4"/></svg>
<div class="a" style="left:743px;top:776px;width:1px;height:16px;background:#444"></div>
<span class="a" style="left:753px;top:777px;font-size:12px;line-height:16px;color:#e0e0e0">appservice</span>
<svg style="left:873px;top:781px" width="9" height="7"><path d="M0.5 0.5h8l-4 6z" fill="#999"/></svg>
<div class="a" style="left:890px;top:776px;width:1px;height:16px;background:#444"></div>
<svg style="left:900px;top:779px" width="18" height="11"><path d="M1 5.5c2.2-3.3 4.8-5 8-5s5.8 1.7 8 5c-2.2 3.3-4.8 5-8 5s-5.8-1.7-8-5z" fill="#999"/><circle cx="9" cy="5.5" r="2.8" fill="#292a2d"/><circle cx="9" cy="5.5" r="1.5" fill="#999"/></svg>
<div class="a" style="left:927px;top:776px;width:1px;height:16px;background:#444"></div>
<div class="a" style="left:934px;top:774px;width:251px;height:21px;border:1px solid #5a5a5a;background:#202124"></div>
<span class="a" style="left:940px;top:777px;font-size:12px;line-height:16px;color:#e0e0e0">Filter</span>
<span class="a" style="left:1192px;top:777px;font-size:12px;line-height:16px;color:#e0e0e0">Default levels</span>
<svg style="left:1267px;top:780px" width="9" height="7"><path d="M0.5 0.5h8l-4 6z" fill="#999"/></svg>
<div class="a" style="left:681px;top:797px;width:770px;height:1px;background:#4f4f4f"></div>
<div class="a" style="left:681px;top:798px;width:770px;height:1px;background:#3a3306"></div>
<div class="a" style="left:681px;top:799px;width:770px;height:1px;background:#6b5600"></div>
<div class="a" style="left:681px;top:800px;width:770px;height:104px;background:#242424"></div>
<div class="a" style="left:681px;top:821px;width:770px;height:1px;background:#3a3a3a"></div>
<div class="a" style="left:681px;top:841px;width:770px;height:1px;background:#3a3a3a"></div>
<div class="a" style="left:681px;top:863px;width:770px;height:1px;background:#3a3a3a"></div>
<div class="a" style="left:681px;top:883px;width:770px;height:1px;background:#3a3a3a"></div>
<div class="a" style="left:681px;top:903px;width:770px;height:1px;background:#5a1a1a"></div>
<svg style="left:707px;top:807px" width="6" height="9"><path d="M0 0l5.5 4-5.5 4z" fill="#999"/></svg>
<svg style="left:707px;top:849px" width="6" height="9"><path d="M0 0l5.5 4-5.5 4z" fill="#999"/></svg>
<div class="cm it" style="left:716px;top:805px"><span>{data: {…}, header: {…}, statusCode: </span><span class="num">200</span><span>, cookies: Array(1), errMsg: </span><span class="str">"request:ok"</span><span>}</span></div>
<div class="cm lk" style="left:705px;top:826px">https://demo15.ynjdzzd008.cn/app/wxapp.php?i=1&amp;v=undefined&amp;m=we7_wmall&amp;c=en…&amp;&amp;from=wxapp&amp;w=manager&amp;state=we7sid-5f0c1a2b</div>
<div class="cm it" style="left:716px;top:847px"><span>{data: {…}, header: {…}, statusCode: </span><span class="num">200</span><span>, cookies: Array(1), errMsg: </span><span class="str">"request:ok"</span><span>}</span></div>
<div class="cm" style="left:705px;top:867px">===<span class="cjc">商户小程序</span>sessionid<span class="cjc2">为空</span>======</div>
<div class="cm lk" style="left:705px;top:888px">https://demo15.ynjdzzd008.cn/app/wxapp.php?i=1&amp;v=undefined&amp;m=we7_wmall&amp;c=entry&amp;do=mobile&amp;ctrl=manage&amp;ac=auth&amp;op=1</div>


</body></html>
